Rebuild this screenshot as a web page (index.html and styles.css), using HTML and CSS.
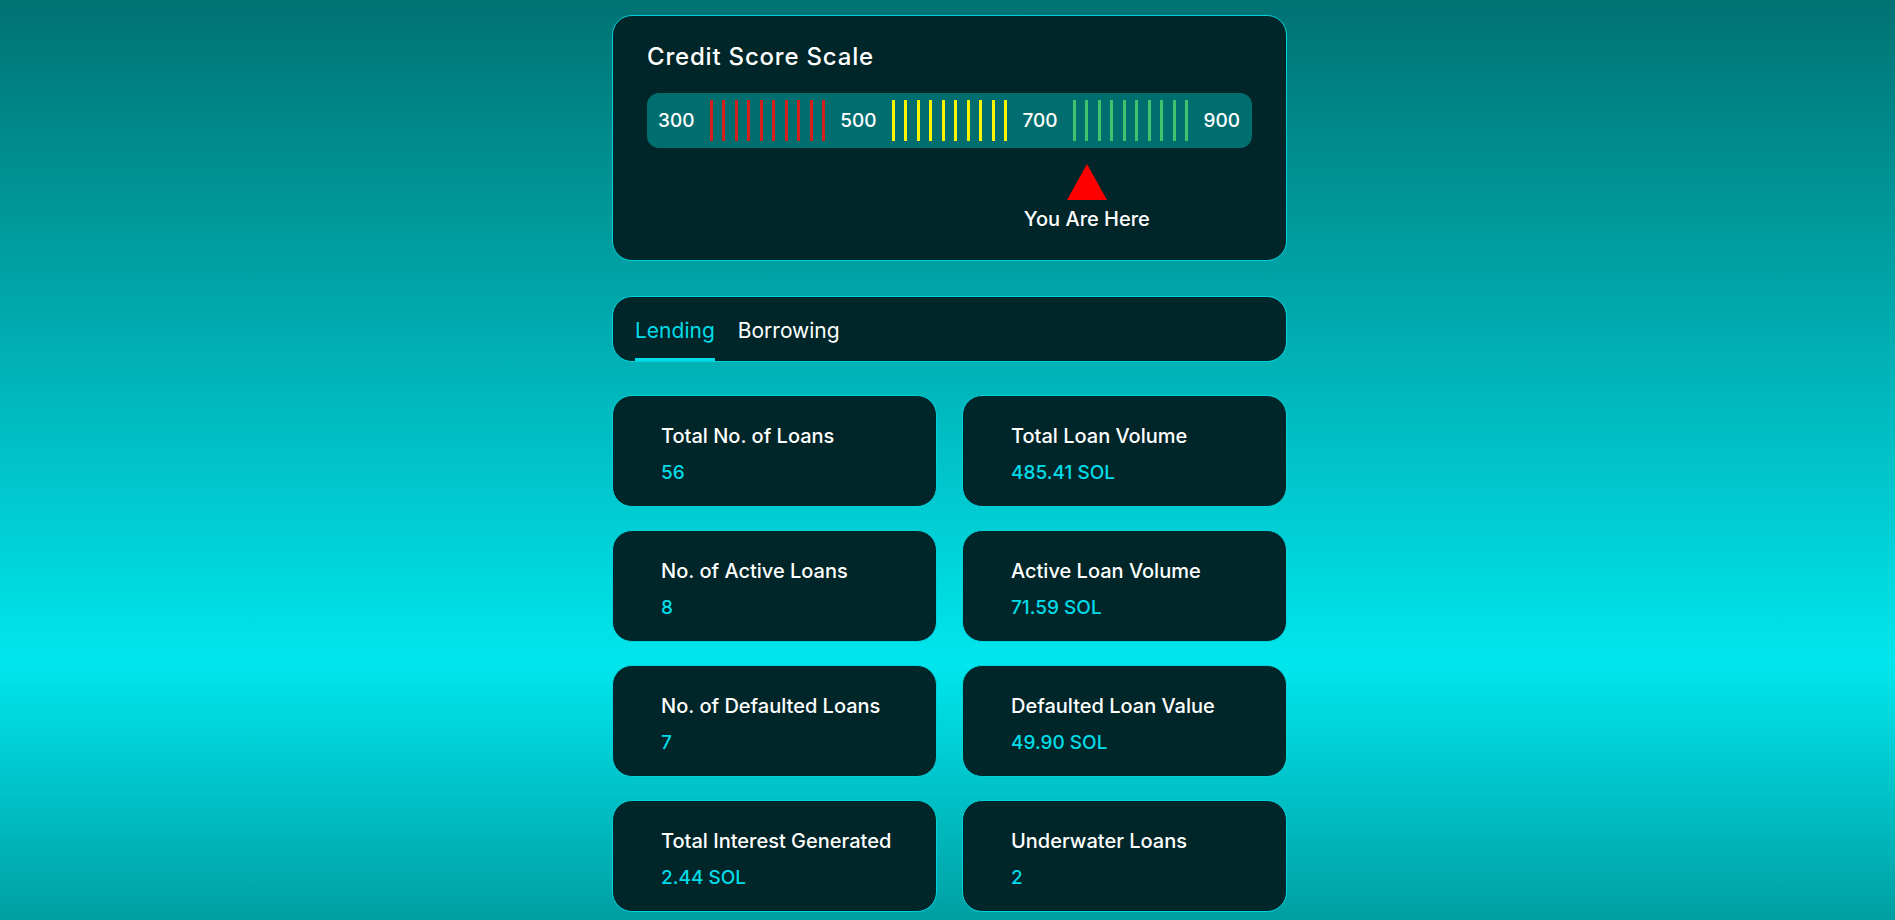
FILE: index.html
```html
<!DOCTYPE html>
<html lang="en">
<head>
    <meta charset="UTF-8">
    <meta name="viewport" content="width=device-width, initial-scale=1.0">
    <title>Credit Score</title>
    <link rel="stylesheet" href="styles.css">
</head>
<body>
    <div class="page">
        <section class="card scale-card">
            <h2 class="scale-title">Credit Score Scale</h2>
            <div class="scale-bar">
                <span class="scale-label">300</span>
                <div class="ticks ticks-red"><i></i><i></i><i></i><i></i><i></i><i></i><i></i><i></i><i></i><i></i></div>
                <span class="scale-label">500</span>
                <div class="ticks ticks-yellow"><i></i><i></i><i></i><i></i><i></i><i></i><i></i><i></i><i></i><i></i></div>
                <span class="scale-label">700</span>
                <div class="ticks ticks-green"><i></i><i></i><i></i><i></i><i></i><i></i><i></i><i></i><i></i><i></i></div>
                <span class="scale-label">900</span>
            </div>
            <div class="marker" style="margin-left: 72.7%">
                <div class="marker-arrow"></div>
                <div class="marker-text">You Are Here</div>
            </div>
        </section>

        <nav class="card tabs">
            <div class="tab tab-active">Lending</div>
            <div class="tab">Borrowing</div>
        </nav>

        <div class="stats">
            <div class="card stat">
                <div class="stat-label">Total No. of Loans</div>
                <div class="stat-value">56</div>
            </div>
            <div class="card stat">
                <div class="stat-label">Total Loan Volume</div>
                <div class="stat-value">485.41 SOL</div>
            </div>
            <div class="card stat">
                <div class="stat-label">No. of Active Loans</div>
                <div class="stat-value">8</div>
            </div>
            <div class="card stat">
                <div class="stat-label">Active Loan Volume</div>
                <div class="stat-value">71.59 SOL</div>
            </div>
            <div class="card stat">
                <div class="stat-label">No. of Defaulted Loans</div>
                <div class="stat-value">7</div>
            </div>
            <div class="card stat">
                <div class="stat-label">Defaulted Loan Value</div>
                <div class="stat-value">49.90 SOL</div>
            </div>
            <div class="card stat">
                <div class="stat-label">Total Interest Generated</div>
                <div class="stat-value">2.44 SOL</div>
            </div>
            <div class="card stat">
                <div class="stat-label">Underwater Loans</div>
                <div class="stat-value">2</div>
            </div>
        </div>
    </div>
</body>
</html>
```

FILE: styles.css
```css
* {
    box-sizing: border-box;
}
body {
    margin: 0;
    padding-left: 4px;
    min-height: 100vh;
    font-family: Inter, "Open Sans", sans-serif;
    color: #fff;
    background: linear-gradient(180deg, #007272 0%, #00e6ee 72%, #009fa2 100%) fixed;
}
.page {
    width: 675px;
    margin: 0 auto;
    padding-top: 15px;
}
.card {
    background-color: #002629;
    border: 1px solid #00d2dc;
    border-radius: 20px;
}
.scale-card {
    padding: 25px 34px 28px;
}
.scale-title {
    margin: 0 0 20px;
    font-size: 24px;
    font-weight: 500;
    line-height: 32px;
    letter-spacing: 0.8px;
}
.scale-bar {
    display: flex;
    align-items: center;
    justify-content: space-between;
    height: 55px;
    padding: 0 12px 0 11px;
    background-color: #006e6f;
    border-radius: 12px;
}
.scale-label {
    font-size: 19px;
    font-weight: 500;
}
.ticks {
    display: flex;
    gap: 9.5px;
}
.ticks i {
    display: block;
    width: 3px;
    height: 41px;
}
.ticks-red i {
    background-color: #d3201f;
}
.ticks-yellow i {
    background-color: #f7f700;
}
.ticks-green i {
    background-color: #3ec46d;
}
.marker {
    width: max-content;
    margin-top: 16px;
    transform: translateX(-50%);
    text-align: center;
}
.marker-arrow {
    width: 0;
    height: 0;
    margin: 0 auto;
    border-left: 20px solid transparent;
    border-right: 20px solid transparent;
    border-bottom: 36px solid #ff0000;
}
.marker-text {
    margin-top: 6px;
    font-size: 20px;
    font-weight: 500;
    line-height: 26px;
}
.tabs {
    display: flex;
    gap: 23px;
    height: 66px;
    margin-top: 35px;
    padding: 0 22px;
}
.tab {
    display: flex;
    align-items: center;
    padding-top: 5px;
    font-size: 21px;
    border-bottom: 3px solid transparent;
}
.tab-active {
    color: #00dbe8;
    border-bottom-color: #00dbe8;
}
.stats {
    display: grid;
    grid-template-columns: 1fr 1fr;
    gap: 23px 25px;
    margin-top: 33px;
}
.stat {
    height: 112px;
    padding: 27px 0 0 48px;
    white-space: nowrap;
}
.stat-label {
    font-size: 20px;
    font-weight: 500;
    line-height: 27px;
}
.stat-value {
    margin-top: 9px;
    font-size: 19px;
    font-weight: 500;
    line-height: 27px;
    color: #00dbe8;
}
```
